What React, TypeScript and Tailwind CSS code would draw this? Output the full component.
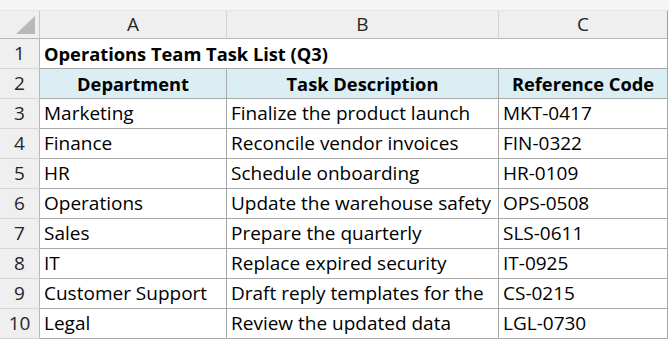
const columns = ["A", "B", "C"];

const rows = [
  ["Marketing", "Finalize the product launch", "MKT-0417"],
  ["Finance", "Reconcile vendor invoices", "FIN-0322"],
  ["HR", "Schedule onboarding", "HR-0109"],
  ["Operations", "Update the warehouse safety", "OPS-0508"],
  ["Sales", "Prepare the quarterly", "SLS-0611"],
  ["IT", "Replace expired security", "IT-0925"],
  ["Customer Support", "Draft reply templates for the", "CS-0215"],
  ["Legal", "Review the updated data", "LGL-0730"],
];

const headers = ["Department", "Task Description", "Reference Code"];

const rowHead =
  "h-[30px] flex items-center justify-center bg-[#efefef] border-r border-b border-r-[#b9b9b9] border-b-[#d6d6d6] text-[#262626]";
const cell =
  "h-[30px] flex items-center px-[4px] overflow-hidden whitespace-nowrap border-r border-b border-[#a8a8a8]";

const App = () => {
  return (
    <div
      className="w-[669px] h-[341px] bg-white overflow-hidden text-[19px] text-black"
      style={{ fontFamily: '"Open Sans", "Liberation Sans", sans-serif' }}
    >
      {/* top strip */}
      <div className="h-[11px] bg-[#f4f5f6] border-b border-[#e2e4e6]" />

      <div className="grid grid-cols-[40px_187px_272px_169px]">
        {/* column headers */}
        <div className="h-[28px] bg-[#efefef] border-r border-b border-r-[#c8c8c8] border-b-[#b9b9b9] flex items-end justify-end p-[3px]">
          <svg width="20" height="19" viewBox="0 0 20 19">
            <polygon points="19,0 19,18 0,18" fill="#b8b8b8" />
          </svg>
        </div>
        {columns.map((col, i) => (
          <div
            key={col}
            className={`h-[28px] flex items-center justify-center bg-[#efefef] border-b border-b-[#b9b9b9] border-r text-[#262626] ${
              i === columns.length - 1 ? "border-r-[#9c9c9c]" : "border-r-[#d4d4d4]"
            }`}
          >
            {col}
          </div>
        ))}

        {/* row 1: title */}
        <div className={rowHead}>1</div>
        <div className="col-span-3 h-[30px] flex items-center px-[4px] font-bold text-[18.3px] whitespace-nowrap border-b border-[#a8a8a8] border-r">
          Operations Team Task List (Q3)
        </div>

        {/* row 2: table header */}
        <div className={rowHead}>2</div>
        {headers.map((h) => (
          <div key={h} className={`${cell} justify-center bg-[#daeef3] font-bold text-[18.3px]`}>
            {h}
          </div>
        ))}

        {/* data rows */}
        {rows.map((r, i) => (
          <div key={i} className="contents">
            <div className={rowHead}>{i + 3}</div>
            {r.map((v, j) => (
              <div key={j} className={cell}>
                {v}
              </div>
            ))}
          </div>
        ))}
      </div>
    </div>
  );
};

export default App;
